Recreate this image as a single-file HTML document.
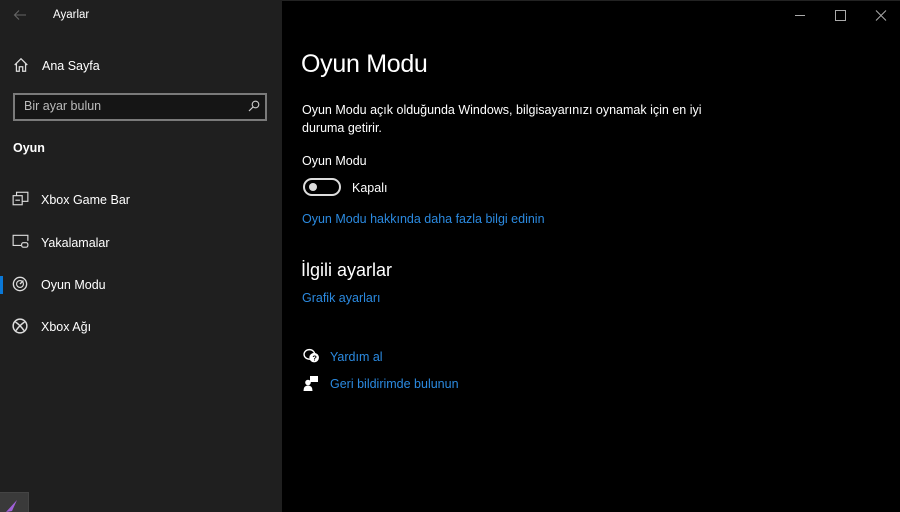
<!DOCTYPE html>
<html><head><meta charset="utf-8"><style>
*{margin:0;padding:0;box-sizing:border-box}
body{width:900px;height:512px;overflow:hidden;background:#000;font-family:"Segoe UI","Liberation Sans",sans-serif;color:#fff;position:relative}
#side{position:absolute;left:0;top:0;width:282px;height:512px;background:#1f1f1f}
.t{position:absolute;white-space:nowrap}
.nav{position:absolute;left:41px;font-size:12.5px;color:#fff}
.ic{position:absolute}
a{color:#2b8ae0;text-decoration:none}
</style></head><body>
<div id="side">
  <svg class="ic" style="left:13px;top:9px" width="14" height="12" viewBox="0 0 14 12"><path d="M13 6H2M6 1.5L1.5 6 6 10.5" stroke="#666" stroke-width="1.1" fill="none"/></svg>
  <div class="t" style="left:53px;top:9px;font-size:11.5px;color:#fff">Ayarlar</div>
  <svg class="ic" style="left:13px;top:57px" width="16" height="16" viewBox="0 0 14 14"><path d="M1.5 7L7 1.5 12.5 7M3 5.5V12.5H5.5V8.5H8.5V12.5H11V5.5" stroke="#ddd" stroke-width="1.1" fill="none"/></svg>
  <div class="nav" style="left:42px;top:59px">Ana Sayfa</div>
  <div style="position:absolute;left:13px;top:93px;width:254px;height:28px;border:2px solid #7a7a7a;background:#151515"></div>
  <div class="t" style="left:24px;top:99px;font-size:12.5px;color:#bbb">Bir ayar bulun</div>
  <svg class="ic" style="left:248px;top:100px" width="12" height="12" viewBox="0 0 12 12"><circle cx="7.5" cy="4.5" r="3.3" stroke="#ccc" fill="none" stroke-width="1.1"/><path d="M5 7L1 11" stroke="#ccc" stroke-width="1.2"/></svg>
  <div class="t" style="left:13px;top:141px;font-size:12.5px;font-weight:bold">Oyun</div>

  <svg class="ic" style="left:12px;top:191px" width="17" height="15" viewBox="0 0 15 13"><rect x="4" y="1" width="10" height="8" stroke="#ddd" fill="none"/><rect x="1" y="4" width="8" height="8" stroke="#ddd" fill="#1f1f1f"/><path d="M3 8h4" stroke="#ddd"/></svg>
  <div class="nav" style="top:193px">Xbox Game Bar</div>
  <svg class="ic" style="left:12px;top:234px" width="17" height="15" viewBox="0 0 15 13"><path d="M8 10H1V1H14V6" stroke="#ddd" fill="none"/><rect x="8.5" y="7.5" width="5.5" height="4" rx="1.5" stroke="#ddd" fill="none"/></svg>
  <div class="nav" style="top:236px">Yakalamalar</div>
  <div style="position:absolute;left:0;top:276px;width:3px;height:18px;background:#0a78d7"></div>
  <svg class="ic" style="left:12px;top:276px" width="16" height="16" viewBox="0 0 14 14"><circle cx="7" cy="7" r="5.8" stroke="#ddd" fill="none" stroke-width="1.2"/><circle cx="7" cy="7" r="3" stroke="#ddd" fill="none"/><path d="M7 7L10 4" stroke="#ddd" stroke-width="1.2"/></svg>
  <div class="nav" style="top:278px">Oyun Modu</div>
  <svg class="ic" style="left:12px;top:318px" width="16" height="16" viewBox="0 0 14 14"><circle cx="7" cy="7" r="6" stroke="#ddd" fill="none" stroke-width="1.3"/><path d="M3 3.5Q7 6 10.5 11M11 3.5Q7 6 3.5 11" stroke="#ddd" fill="none" stroke-width="1.3"/></svg>
  <div class="nav" style="top:320px">Xbox Ağı</div>

  <div style="position:absolute;left:0;top:492px;width:29px;height:20px;background:#3a3a3a;border-top:1px solid #444;border-right:1px solid #444"></div>
  <svg class="ic" style="left:4px;top:496px" width="14" height="16" viewBox="0 0 14 16"><path d="M2 16L13 4 8 15Z" fill="#a060d8"/></svg>
</div>
<div style="position:absolute;left:282px;top:0;width:618px;height:1px;background:#222"></div>
<svg class="ic" style="left:792px;top:10px" width="100" height="12" viewBox="0 0 100 12"><path d="M3 5.5H13" stroke="#aaa"/><rect x="43.5" y="0.5" width="10" height="10" stroke="#aaa" fill="none"/><path d="M84 0.5L94 10.5M94 0.5L84 10.5" stroke="#aaa"/></svg>

<div class="t" style="left:301px;top:50px;font-size:25px;font-weight:300;letter-spacing:-0.3px">Oyun Modu</div>
<div class="t" style="left:302px;top:101px;font-size:12.5px;line-height:18px">Oyun Modu açık olduğunda Windows, bilgisayarınızı oynamak için en iyi<br>duruma getirir.</div>
<div class="t" style="left:302px;top:154px;font-size:12.5px">Oyun Modu</div>
<div style="position:absolute;left:303px;top:178px;width:38px;height:18px;border:2px solid #ddd;border-radius:9px"></div>
<div style="position:absolute;left:309px;top:183px;width:8px;height:8px;border-radius:50%;background:#ddd"></div>
<div class="t" style="left:352px;top:181px;font-size:12.5px">Kapalı</div>
<div class="t" style="left:302px;top:212px;font-size:12.5px"><a>Oyun Modu hakkında daha fazla bilgi edinin</a></div>
<div class="t" style="left:301px;top:260px;font-size:18px">İlgili ayarlar</div>
<div class="t" style="left:302px;top:291px;font-size:12.5px"><a>Grafik ayarları</a></div>
<svg class="ic" style="left:303px;top:348px" width="17" height="16" viewBox="0 0 16 15"><ellipse cx="6" cy="6" rx="5" ry="4.5" stroke="#fff" fill="none" stroke-width="1.3"/><circle cx="10.5" cy="9" r="4.5" fill="#fff"/><text x="8.8" y="11.8" font-size="7" fill="#000" font-family="Liberation Sans" font-weight="bold">?</text></svg>
<div class="t" style="left:330px;top:350px;font-size:12.5px"><a>Yardım al</a></div>
<svg class="ic" style="left:303px;top:375px" width="16" height="17" viewBox="0 0 16 16"><rect x="7" y="0.5" width="8" height="6" fill="#fff"/><circle cx="5" cy="7" r="2.8" fill="#fff"/><path d="M0.5 15.5Q0.5 10 5 10Q9.5 10 9.5 15.5Z" fill="#fff"/></svg>
<div class="t" style="left:330px;top:377px;font-size:12.5px"><a>Geri bildirimde bulunun</a></div>
</body></html>
